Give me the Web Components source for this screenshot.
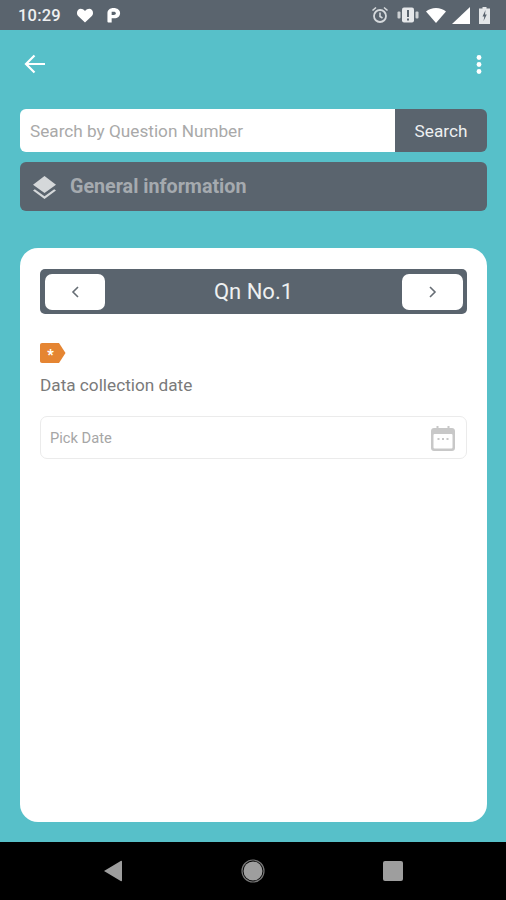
<!DOCTYPE html>
<html>
<head>
  <style>
    html, body { margin: 0; height: 100%; }
    body { font-family: Roboto, "Liberation Sans", sans-serif; background: #57c0c9; }
    app-screen { height: 900px; }
  </style>
</head>
<body>
  <app-screen>
    <status-bar></status-bar>
    <tool-bar></tool-bar>
    <search-row placeholder="Search by Question Number" label="Search"></search-row>
    <section-banner>General information</section-banner>
    <question-card>
      <question-nav>Qn No.1</question-nav>
      <required-tag></required-tag>
      <field-label>Data collection date</field-label>
      <date-field placeholder="Pick Date"></date-field>
    </question-card>
    <nav-bar></nav-bar>
  </app-screen>

  <script>
    class Base extends HTMLElement {
      constructor() {
        super();
        this.attachShadow({ mode: 'open' });
        this.shadowRoot.innerHTML = this.markup();
      }
    }

    class AppScreen extends Base {
      markup() {
        return `<style>:host { display: flex; flex-direction: column; width: 506px; overflow: hidden; }</style><slot></slot>`;
      }
    }
    customElements.define('app-screen', AppScreen);

    class StatusBar extends Base {
      markup() {
        return `<style>
          :host { display: flex; align-items: center; height: 30px; flex: none; background: #5a646e; color: #eef0f1; padding: 0 16px 0 18px; box-sizing: border-box; }
          .time { font-size: 16.500px; font-weight: 500; letter-spacing: 0.2px; margin-right: 15px; }
          svg { display: block; flex: none; }
          .left { display: flex; align-items: center; gap: 13px; }
          .right { display: flex; align-items: center; margin-left: auto; }
        </style>
        <span class="time">10:29</span>
        <div class="left">
          <svg width="18" height="16" viewBox="0 0 18 16"><path fill="#fff" d="M9 15.500 2.400 9.300C.6 7.500.5 4.600 2 2.900 3.700 1 6.800 1.300 9 3.900 11.200 1.300 14.300 1 16 2.900c1.500 1.700 1.400 4.600-.4 6.400z"/></svg>
          <svg width="14" height="15" viewBox="0 0 14 16"><path fill="#fff" fill-rule="evenodd" d="M0 5.500C0 2.400 2.500 0 6.500 0 10.700 0 13.500 2.300 13.500 5.500 13.500 8.800 10.700 11 7.500 11H4.500V15.500H1C.4 15.500 0 15.100 0 14.500zM4.500 4V7.500H6.800C8 7.500 9 6.800 9 5.700 9 4.600 8 4 6.800 4z"/></svg>
        </div>
        <div class="right">
          <svg width="18" height="18" viewBox="0 0 18 18" style="margin-right:8px"><circle cx="9" cy="10" r="6" fill="none" stroke="#d5d9dc" stroke-width="1.800"/><path d="M9 6.500V10.500L11.500 12M1.500 4.500 5 1.500M16.500 4.500 13 1.500" fill="none" stroke="#d5d9dc" stroke-width="1.600"/></svg>
          <svg width="22" height="16" viewBox="0 0 22 16" style="margin-right:7px"><rect x="5" y="0.500" width="12" height="15" rx="2" fill="#e6e8ea"/><rect x="10" y="3" width="2" height="7" fill="#5a646e"/><rect x="10" y="11.500" width="2" height="2" fill="#5a646e"/><rect x="0.500" y="4.500" width="3" height="7" rx="1" fill="#cdd1d4"/><rect x="18.500" y="4.500" width="3" height="7" rx="1" fill="#cdd1d4"/></svg>
          <svg width="20" height="15" viewBox="0 0 20 15" style="margin-right:6px"><path fill="#fff" d="M0 3.500C2.700 1.200 6.100 0 10 0 13.900 0 17.300 1.200 20 3.500L10 15z"/></svg>
          <svg width="18" height="17" viewBox="0 0 18 17" style="margin-right:9px"><path fill="#fff" d="M18 0V17H0z"/></svg>
          <svg width="11" height="17" viewBox="0 0 11 17"><path fill="#e3e6e8" d="M3.500 0H7.500V1.500H11V17H0V1.500H3.500z"/><path fill="#5a646e" d="M6.500 3 3.500 9.500H5.300L4.500 14 7.800 7.500H6z"/></svg>
        </div>`;
      }
    }
    customElements.define('status-bar', StatusBar);

    class ToolBar extends Base {
      markup() {
        return `<style>
          :host { display: flex; align-items: flex-start; justify-content: space-between; height: 79px; flex: none; padding: 24px 23px 0 24px; box-sizing: border-box; }
          svg { display: block; }
        </style>
        <svg width="22" height="20" viewBox="0 0 22 20"><path d="M21 10H2.500M10.500 1.500 2 10l8.500 8.500" fill="none" stroke="#fff" stroke-width="2.200"/></svg>
        <svg width="8" height="22" viewBox="0 0 8 22"><circle cx="4" cy="3.500" r="2.400" fill="#fff"/><circle cx="4" cy="10.500" r="2.400" fill="#fff"/><circle cx="4" cy="17.500" r="2.400" fill="#fff"/></svg>`;
      }
    }
    customElements.define('tool-bar', ToolBar);

    class SearchRow extends Base {
      markup() {
        return `<style>
          :host { display: flex; height: 43px; flex: none; margin: 0 19px 0 20px; }
          .input { flex: 1; display: flex; align-items: center; background: #fff; border-radius: 6px 0 0 6px; padding: 1px 0 0 10px; color: #a9a9a9; font-size: 17.200px; }
          .btn { width: 92px; display: flex; align-items: center; justify-content: center; background: #5a646e; color: #eef0f1; font-size: 17.200px; padding-top: 1px; border-radius: 0 6px 6px 0; }
        </style>
        <div class="input">${this.getAttribute('placeholder')}</div>
        <div class="btn">${this.getAttribute('label')}</div>`;
      }
    }
    customElements.define('search-row', SearchRow);

    class SectionBanner extends Base {
      markup() {
        return `<style>
          :host { display: flex; align-items: center; height: 49px; flex: none; margin: 10px 19px 0 20px; padding-left: 13px; box-sizing: border-box; background: #5a646e; border-radius: 6px; color: #a5aaaf; font-size: 19.700px; font-weight: 700; }
          svg { display: block; margin-right: 14px; }
        </style>
        <svg width="23" height="24" viewBox="0 0 23 24"><path fill="#d5d8da" d="M11.500 1 23 9.800 11.500 18 0 9.800z"/><path fill="#d5d8da" d="M1.800 14.200 0 15.500 11.500 24 23 15.500 21.200 14.200 11.500 21.300z"/></svg>
        <slot></slot>`;
      }
    }
    customElements.define('section-banner', SectionBanner);

    class QuestionCard extends Base {
      markup() {
        return `<style>
          :host { display: flex; flex-direction: column; height: 574px; flex: none; margin: 37px 19px 0 20px; padding: 21px 20px 0; box-sizing: border-box; background: #fff; border-radius: 18px; }
        </style><slot></slot>`;
      }
    }
    customElements.define('question-card', QuestionCard);

    class QuestionNav extends Base {
      markup() {
        return `<style>
          :host { display: flex; align-items: center; justify-content: space-between; height: 45px; flex: none; padding: 0 4px 0 5px; box-sizing: border-box; background: #5a646e; border-radius: 5px; color: #eef0f1; font-size: 22px; }
          .btn { width: 61px; height: 36px; display: flex; align-items: center; justify-content: center; background: #fff; border-radius: 7px; }
          .btn.prev { width: 60px; }
          svg { display: block; }
        </style>
        <div class="btn prev"><svg width="10" height="14" viewBox="0 0 10 14"><path d="M8 2 3 7l5 5" fill="none" stroke="#666d74" stroke-width="1.600"/></svg></div>
        <slot></slot>
        <div class="btn"><svg width="10" height="14" viewBox="0 0 10 14"><path d="M2 2l5 5-5 5" fill="none" stroke="#666d74" stroke-width="1.600"/></svg></div>`;
      }
    }
    customElements.define('question-nav', QuestionNav);

    class RequiredTag extends Base {
      markup() {
        return `<style>
          :host { display: block; height: 20px; flex: none; margin-top: 29px; }
          svg { display: block; }
        </style>
        <svg width="26" height="20" viewBox="0 0 26 20"><path fill="#e58532" d="M2 0H19L25.500 10 19 20H2C.9 20 0 19.100 0 18V2C0 .9.900 0 2 0z"/><text x="10.500" y="16.500" text-anchor="middle" font-family="Roboto, sans-serif" font-size="14" font-weight="900" fill="#fff">*</text></svg>`;
      }
    }
    customElements.define('required-tag', RequiredTag);

    class FieldLabel extends Base {
      markup() {
        return `<style>
          :host { display: block; flex: none; margin-top: 12px; height: 20px; line-height: 20px; color: #7a7a7a; font-size: 17.200px; }
        </style><slot></slot>`;
      }
    }
    customElements.define('field-label', FieldLabel);

    class DateField extends Base {
      markup() {
        return `<style>
          :host { display: flex; align-items: center; justify-content: space-between; height: 43px; flex: none; margin-top: 21px; padding: 0 11px 0 9px; box-sizing: border-box; border: 1px solid #ebebeb; border-radius: 7px; color: #a6a6a6; font-size: 14.700px; }
          svg { display: block; }
        </style>
        <span>${this.getAttribute('placeholder')}</span>
        <svg width="24" height="26" viewBox="0 0 24 26"><path fill="#c8c8c8" d="M3 3H5.500V1H7.500V3H16.500V1H18.500V3H21C22.700 3 24 4.300 24 6V23C24 24.700 22.700 26 21 26H3C1.300 26 0 24.700 0 23V6C0 4.300 1.300 3 3 3z"/><rect x="2.500" y="9" width="19" height="14.500" rx="1" fill="#fff"/><rect x="6.500" y="13" width="2" height="2" fill="#c8c8c8"/><rect x="11" y="13" width="2" height="2" fill="#c8c8c8"/><rect x="15.500" y="13" width="2" height="2" fill="#c8c8c8"/></svg>`;
      }
    }
    customElements.define('date-field', DateField);

    class NavBar extends Base {
      markup() {
        return `<style>
          :host { display: grid; grid-template-columns: repeat(3, 140px); justify-content: center; justify-items: center; align-items: center; height: 58px; flex: none; margin-top: 20px; background: #000; }
          svg { display: block; }
        </style>
        <svg width="20" height="22" viewBox="0 0 20 22" style="margin-left:-1px"><path fill="#9e9e9e" d="M19 1.500V20.500C19 21.300 18.300 21.500 17.700 21.100L1 11 17.700.9C18.300.5 19 .7 19 1.500z"/></svg>
        <svg width="24" height="24" viewBox="0 0 24 24"><circle cx="12" cy="12" r="9.500" fill="#9e9e9e"/><circle cx="12" cy="12" r="11" fill="none" stroke="#777" stroke-width="1.200"/></svg>
        <svg width="20" height="20" viewBox="0 0 20 20"><rect width="20" height="20" rx="2" fill="#9e9e9e"/></svg>`;
      }
    }
    customElements.define('nav-bar', NavBar);
  </script>
</body>
</html>
